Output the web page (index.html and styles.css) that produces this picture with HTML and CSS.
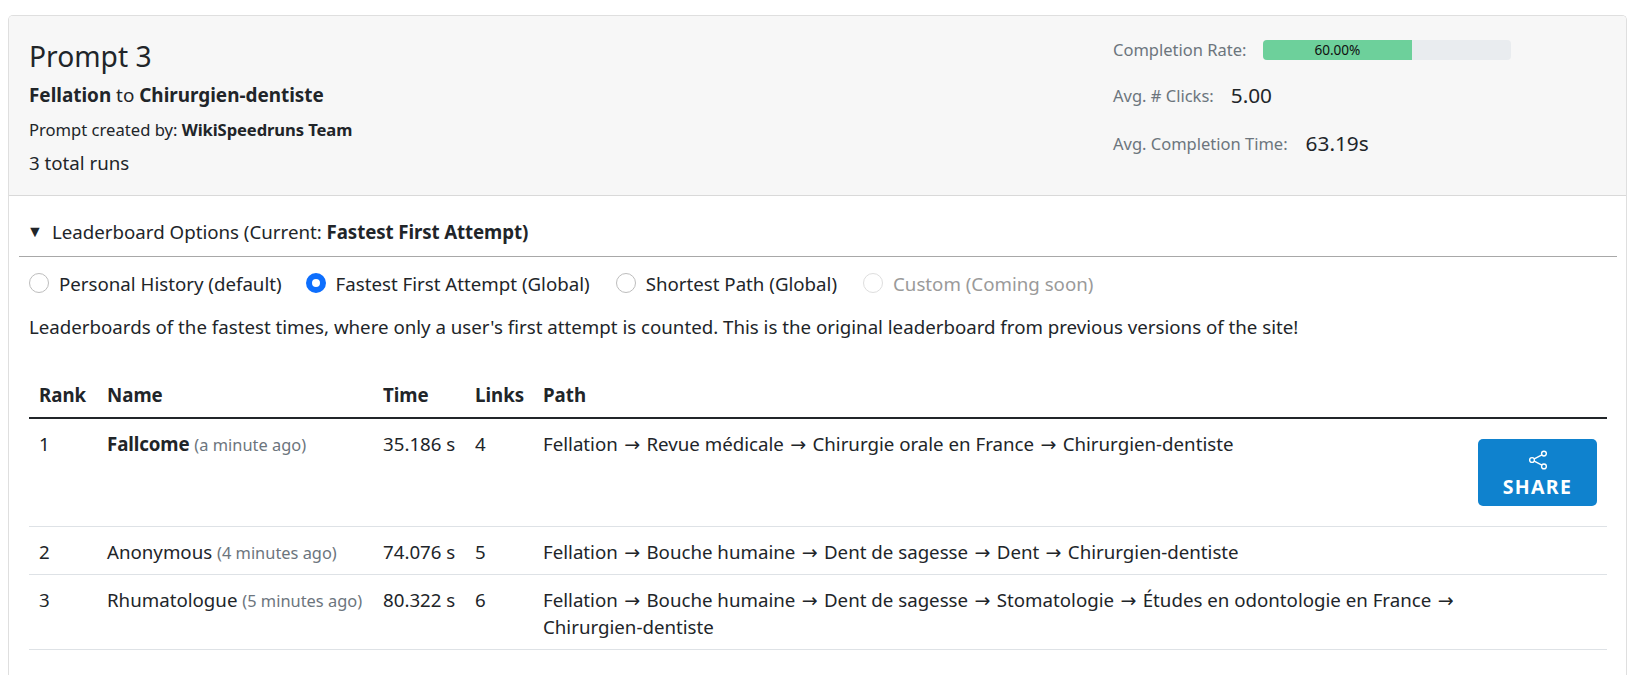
FILE: index.html
```html
<!DOCTYPE html>
<html lang="en">
<head>
<meta charset="utf-8">
<title>Prompt 3</title>
<link rel="stylesheet" href="styles.css">
</head>
<body>
<section class="card">
  <header class="card-head">
    <div class="info">
      <h3 class="title">Prompt 3</h3>
      <p class="route"><strong>Fellation</strong> to <strong>Chirurgien-dentiste</strong></p>
      <p class="creator">Prompt created by: <strong>WikiSpeedruns Team</strong></p>
      <p class="total">3 total runs</p>
    </div>
    <div class="stats">
      <div class="stat stat-rate">
        <span class="stat-label">Completion Rate:</span>
        <div class="progress"><div class="progress-bar" style="width:60%">60.00%</div></div>
      </div>
      <div class="stat stat-clicks"><span class="stat-label">Avg. # Clicks:</span><span class="stat-value">5.00</span></div>
      <div class="stat stat-time"><span class="stat-label">Avg. Completion Time:</span><span class="stat-value">63.19s</span></div>
    </div>
  </header>
  <div class="card-body">
    <div class="summary"><span class="caret">▼</span><span>Leaderboard Options (Current: <strong>Fastest First Attempt)</strong></span></div>
    <div class="options">
      <label class="option"><span class="radio"></span>Personal History (default)</label>
      <label class="option"><span class="radio radio-on"></span>Fastest First Attempt (Global)</label>
      <label class="option"><span class="radio"></span>Shortest Path (Global)</label>
      <label class="option option-off"><span class="radio radio-off"></span>Custom (Coming soon)</label>
    </div>
    <p class="desc">Leaderboards of the fastest times, where only a user's first attempt is counted. This is the original leaderboard from previous versions of the site!</p>
    <table class="board">
      <colgroup><col class="c-rank"><col class="c-name"><col class="c-time"><col class="c-links"><col class="c-path"><col class="c-share"></colgroup>
      <thead>
        <tr><th>Rank</th><th>Name</th><th>Time</th><th>Links</th><th>Path</th><th></th></tr>
      </thead>
      <tbody>
        <tr class="row-one">
          <td>1</td>
          <td><strong>Fallcome</strong> <small>(a minute ago)</small></td>
          <td class="time">35.186 s</td>
          <td>4</td>
          <td>Fellation <span class="arr">→</span> Revue médicale <span class="arr">→</span> Chirurgie orale en France <span class="arr">→</span> Chirurgien-dentiste</td>
          <td class="share-cell">
            <button class="share" type="button">
              <svg class="share-icon" viewBox="0 0 24 24" width="22" height="22" fill="none" stroke="#fff" stroke-width="1.5"><circle cx="18.5" cy="5" r="2.6"/><circle cx="5.5" cy="12" r="2.6"/><circle cx="18.5" cy="19" r="2.6"/><path d="M7.9 10.7l8.3-4.4M7.9 13.3l8.3 4.4"/></svg>
              <span class="share-text">SHARE</span>
            </button>
          </td>
        </tr>
        <tr class="row-two">
          <td>2</td>
          <td>Anonymous <small>(4 minutes ago)</small></td>
          <td class="time">74.076 s</td>
          <td>5</td>
          <td>Fellation <span class="arr">→</span> Bouche humaine <span class="arr">→</span> Dent de sagesse <span class="arr">→</span> Dent <span class="arr">→</span> Chirurgien-dentiste</td>
          <td></td>
        </tr>
        <tr>
          <td>3</td>
          <td>Rhumatologue <small>(5 minutes ago)</small></td>
          <td class="time">80.322 s</td>
          <td>6</td>
          <td>Fellation <span class="arr">→</span> Bouche humaine <span class="arr">→</span> Dent de sagesse <span class="arr">→</span> Stomatologie <span class="arr">→</span> Études en odontologie en France <span class="arr">→</span> Chirurgien-dentiste</td>
          <td></td>
        </tr>
      </tbody>
    </table>
  </div>
</section>
</body>
</html>
```

FILE: styles.css
```css
* { box-sizing: border-box; }
html, body { margin: 0; padding: 0; background: #fff; }
body {
  font-family: "Noto Sans", "Open Sans", sans-serif;
  font-size: 18.7px;
  line-height: 27px;
  color: #212529;
  padding: 15px 25px 0 8px;
  height: 675px;
  overflow: hidden;
}
strong { font-weight: 700; letter-spacing: -0.1px; }
p { margin: 0; }
.card {
  border: 1px solid #dfdfdf;
  border-bottom: 0;
  border-radius: 5px 5px 0 0;
  height: 660px;
}
.card-head {
  display: flex;
  height: 180px;
  background: #f7f7f7;
  border-bottom: 1px solid #d9d9d9;
  border-radius: 4px 4px 0 0;
}
.info { flex: 1; padding: 20px 0 0 20px; }
.title { margin: 0; font-size: 28.2px; line-height: 40px; font-weight: 400; }
.route { font-size: 18.9px; line-height: 24px; margin-top: 7px; }
.route strong { letter-spacing: 0; }
.creator { font-size: 16.6px; line-height: 24px; margin-top: 11px; }
.total { line-height: 24px; margin-top: 9px; }
.stats { width: 513px; padding-top: 24px; }
.stat { display: flex; align-items: center; }
.stat-label { color: #6c757d; font-size: 16.5px; }
.stat-value { font-size: 20.8px; }
.stat-rate { height: 20px; }
.stat-rate .stat-label { width: 150px; position: relative; top: -1px; }
.stat-clicks { height: 30px; margin-top: 20px; }
.stat-clicks .stat-value { margin-left: 17px; }
.stat-time { height: 30px; margin-top: 18px; }
.stat-time .stat-value { margin-left: 18px; }
.progress { width: 248px; height: 20px; background: #e9ecef; border-radius: 4px; overflow: hidden; }
.progress-bar { height: 20px; background: #6dd09b; font-size: 13.6px; line-height: 20px; text-align: center; color: #111; }
.card-body { padding: 0 9px 0 10px; }
.summary {
  display: flex;
  align-items: center;
  height: 61px;
  padding: 10px 0 0 10px;
  border-bottom: 1px solid #a8a8a8;
}
.caret { font-size: 16px; width: 23px; margin-left: -2px; margin-right: 2px; }
.options { display: flex; height: 52px; padding-left: 10px; align-items: center; }
.option { display: flex; align-items: center; margin-right: 26px; }
.option:first-child { margin-right: 24px; }
.option-off { color: #9a9a9a; }
.radio { width: 20px; height: 20px; border: 1px solid #bdbdbd; border-radius: 50%; margin-right: 10px; background: #fff; }
.radio-on { border: 6px solid #0d6efd; }
.radio-off { border-color: #dedede; }
.desc { padding-left: 10px; height: 65px; line-height: 36px; }
.board { width: 1578px; margin-left: 10px; border-collapse: collapse; table-layout: fixed; }
.c-rank { width: 68px; }
.c-name { width: 276px; }
.c-time { width: 92px; }
.c-links { width: 68px; }
.c-path { width: 941px; }
.board th { text-align: left; font-weight: 700; height: 44px; padding: 0 10px 2px; border-bottom: 2px solid #212529; vertical-align: middle; }
.board td { padding: 11px 10px 9px; vertical-align: top; border-bottom: 1px solid #dee2e6; }
.board small { color: #6c757d; font-size: 16.4px; line-height: 0; }
.board .time { white-space: nowrap; }
.arr { font-family: "DejaVu Sans", sans-serif; font-size: 19px; line-height: 0; padding: 0 1.5px; }
.board .share-cell { text-align: right; padding: 11px 10px 9px 0; }
.row-one td { height: 108px; }
.row-two td { height: 48px; }
.share {
  display: inline-flex;
  flex-direction: column;
  align-items: center;
  width: 119px;
  height: 67px;
  margin: 9px 0 0;
  padding: 10px 0 0;
  background: #0f82ce;
  color: #fff;
  border: 0;
  border-radius: 5px;
  font: 700 19.5px/26px "Noto Sans", sans-serif;
  letter-spacing: 1.3px;
}
.share-icon { display: block; }
.share-text { margin-top: 3px; }
```
